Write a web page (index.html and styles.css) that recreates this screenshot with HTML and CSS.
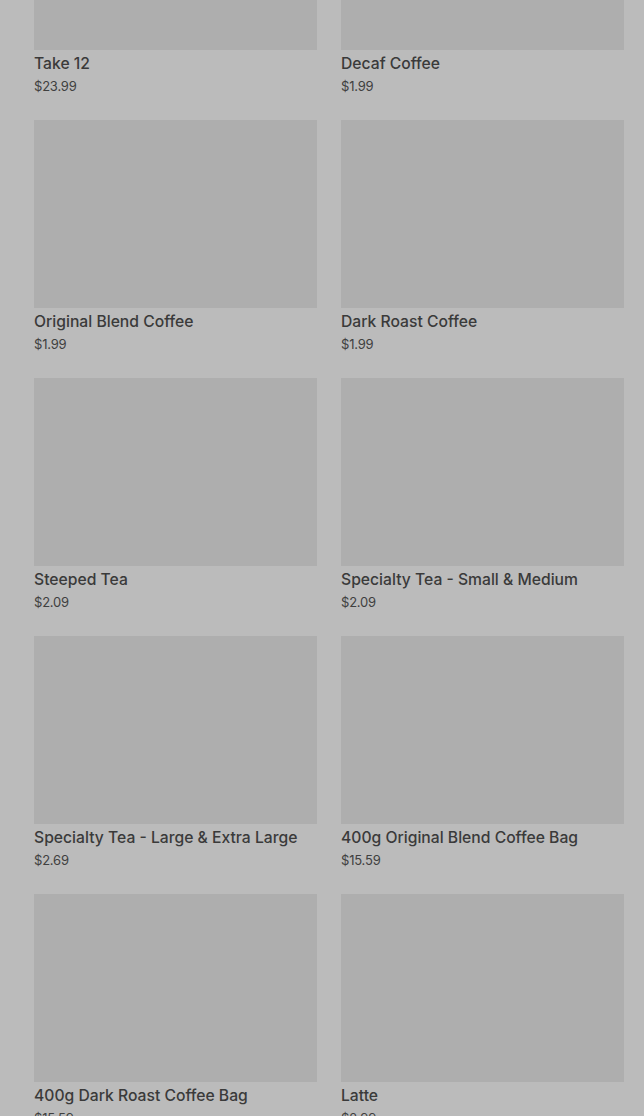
FILE: index.html
```html
<!DOCTYPE html>
<html lang="en">
<head>
  <meta charset="UTF-8" />
  <meta name="viewport" content="width=device-width, initial-scale=1" />
  <title>Menu</title>
  <link rel="stylesheet" href="styles.css">
</head>
<body>
  <div class="menu">
    <div class="item">
      <div class="thumb"></div>
      <div class="name">Take 12</div>
      <div class="price">$23.99</div>
    </div>
    <div class="item">
      <div class="thumb"></div>
      <div class="name">Decaf Coffee</div>
      <div class="price">$1.99</div>
    </div>
    <div class="item">
      <div class="thumb"></div>
      <div class="name">Original Blend Coffee</div>
      <div class="price">$1.99</div>
    </div>
    <div class="item">
      <div class="thumb"></div>
      <div class="name">Dark Roast Coffee</div>
      <div class="price">$1.99</div>
    </div>
    <div class="item">
      <div class="thumb"></div>
      <div class="name">Steeped Tea</div>
      <div class="price">$2.09</div>
    </div>
    <div class="item">
      <div class="thumb"></div>
      <div class="name">Specialty Tea - Small &amp; Medium</div>
      <div class="price">$2.09</div>
    </div>
    <div class="item">
      <div class="thumb"></div>
      <div class="name">Specialty Tea - Large &amp; Extra Large</div>
      <div class="price">$2.69</div>
    </div>
    <div class="item">
      <div class="thumb"></div>
      <div class="name">400g Original Blend Coffee Bag</div>
      <div class="price">$15.59</div>
    </div>
    <div class="item">
      <div class="thumb"></div>
      <div class="name">400g Dark Roast Coffee Bag</div>
      <div class="price">$15.59</div>
    </div>
    <div class="item">
      <div class="thumb"></div>
      <div class="name">Latte</div>
      <div class="price">$2.99</div>
    </div>
  </div>
</body>
</html>
```
FILE: styles.css
```css
body {
  margin: 0;
  background: #bbbbbb;
  color: #3a3a3a;
  font-family: Inter, Roboto, "Liberation Sans", sans-serif;
  overflow: hidden;
}

.menu {
  display: grid;
  grid-template-columns: 283px 283px;
  column-gap: 24px;
  row-gap: 24px;
  padding-left: 34px;
  margin-top: -138px;
}

.thumb {
  height: 188px;
  background: #aeaeae;
}

.name {
  font-size: 15.7px;
  font-weight: 500;
  line-height: 27px;
}

.price {
  font-size: 13px;
  line-height: 19px;
  color: #404040;
  letter-spacing: -0.2px;
}
```
